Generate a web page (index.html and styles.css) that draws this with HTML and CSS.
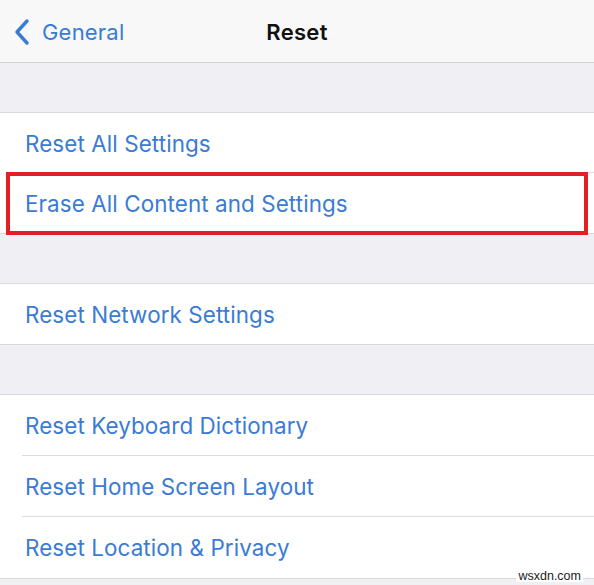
FILE: index.html
```html
<!DOCTYPE html>
<html lang="en">
<head>
<meta charset="utf-8">
<title>Reset</title>
<link rel="stylesheet" href="styles.css">
</head>
<body>
<div class="screen">
  <header class="navbar">
    <a class="back" href="#">
      <svg class="chevron" width="18" height="28" viewBox="0 0 18 28" aria-hidden="true">
        <path d="M14 3 L4 14 L14 25" fill="none" stroke="currentColor" stroke-width="3.4" stroke-linecap="round" stroke-linejoin="round"/>
      </svg>
      <span>General</span>
    </a>
    <h1 class="title">Reset</h1>
  </header>

  <div class="spacer"></div>
  <ul class="group">
    <li class="row">Reset All Settings</li>
    <li class="row highlighted">Erase All Content and Settings</li>
  </ul>

  <div class="spacer"></div>
  <ul class="group">
    <li class="row">Reset Network Settings</li>
  </ul>

  <div class="spacer"></div>
  <ul class="group tall">
    <li class="row">Reset Keyboard Dictionary</li>
    <li class="row">Reset Home Screen Layout</li>
    <li class="row">Reset Location &amp; Privacy</li>
  </ul>

  <div class="footer">
    <span class="watermark">wsxdn.com</span>
  </div>
</div>
</body>
</html>
```

FILE: styles.css
```css
* {
  box-sizing: border-box;
}

html, body {
  margin: 0;
  padding: 0;
  background: #f0f0f4;
}

.screen {
  width: 594px;
  height: 585px;
  overflow: hidden;
  font-family: "Inter", "Liberation Sans", sans-serif;
  background: #f0f0f4;
}

.navbar {
  position: relative;
  height: 63px;
  background: #f8f8f8;
  border-bottom: 1px solid #d3d3d6;
  display: flex;
  align-items: center;
  justify-content: center;
}

.back {
  position: absolute;
  left: 13px;
  top: 18px;
  display: flex;
  align-items: center;
  gap: 11px;
  color: #3a7bd5;
  text-decoration: none;
  font-size: 22px;
  letter-spacing: 0.2px;
}

.chevron {
  display: block;
}

.title {
  margin: 0;
  font-size: 22px;
  font-weight: 600;
  color: #111;
  letter-spacing: 0.3px;
  padding-top: 2px;
}

.spacer {
  height: 49px;
}

.group {
  list-style: none;
  margin: 0;
  padding: 0;
  background: #fff;
  border-top: 1px solid #d9d9dc;
  border-bottom: 1px solid #d9d9dc;
}

.row {
  position: relative;
  height: 60px;
  display: flex;
  align-items: center;
  padding-left: 25px;
  font-size: 22.4px;
  color: #3a7bd5;
  letter-spacing: 0.1px;
}

.group.tall .row {
  height: 61px;
}

.row + .row::before {
  content: "";
  position: absolute;
  left: 22px;
  right: 0;
  top: -1px;
  height: 1px;
  background: #dcdcdf;
}

.row.highlighted::after {
  content: "";
  position: absolute;
  left: 6px;
  right: 6px;
  top: -1px;
  bottom: -2px;
  border: 4px solid #e31e25;
}

.footer {
  position: relative;
  height: 8px;
}

.watermark {
  position: absolute;
  right: 11px;
  bottom: 5px;
  font-family: "Liberation Sans", sans-serif;
  font-size: 12.5px;
  line-height: 12px;
  color: #222;
  background: #fff;
  padding: 0 2px;
}
```
